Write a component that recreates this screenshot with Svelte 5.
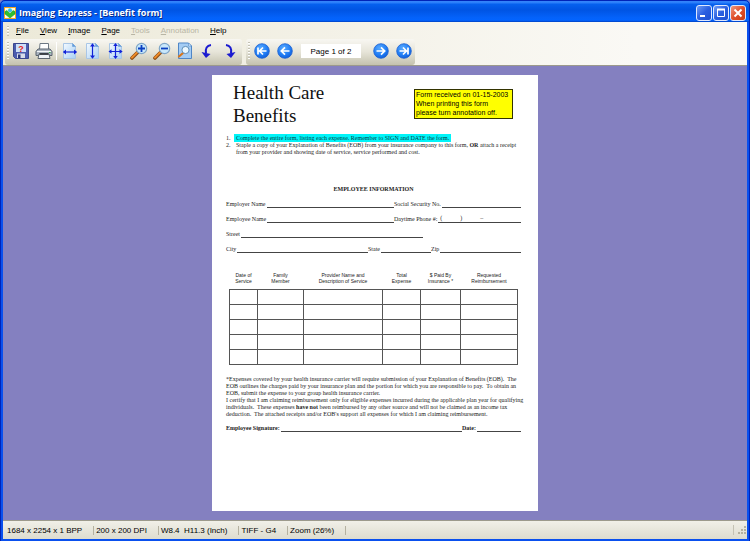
<script lang="ts">
	const menus = [
		{ key: 'F', rest: 'ile', off: false },
		{ key: 'V', rest: 'iew', off: false },
		{ key: 'I', rest: 'mage', off: false },
		{ key: 'P', rest: 'age', off: false },
		{ key: 'T', rest: 'ools', off: true },
		{ key: 'A', rest: 'nnotation', off: true },
		{ key: 'H', rest: 'elp', off: false }
	];

	const columns = [
		{ top: 'Date of', bottom: 'Service', width: 28 },
		{ top: 'Family', bottom: 'Member', width: 46 },
		{ top: 'Provider Name and', bottom: 'Description of Service', width: 79 },
		{ top: 'Total', bottom: 'Expense', width: 38 },
		{ top: '$ Paid By', bottom: 'Insurance *', width: 40 },
		{ top: 'Requested', bottom: 'Reimbursement', width: 57 }
	];
	const rows = [1, 2, 3, 4, 5];

	const status = ['1684 x 2254 x 1 BPP', '200 x 200 DPI', 'W8.4  H11.3 (Inch)', 'TIFF - G4', 'Zoom (26%)'];

	let page = $state(1);
	const total = 2;
	let pageLabel = $derived(`Page ${page} of ${total}`);
</script>

{#snippet sheet()}
	<path d="M2.5 1.5h9l3 3v12h-12z" fill="url(#sheet)" stroke="#a9c6e6" />
	<path d="M11.5 1.5v3h3z" fill="#5d9be0" stroke="#6f9fd4" stroke-width=".6" />
{/snippet}

{#snippet lens(plus: boolean)}
	<path d="M2 16l6-6" stroke="#8a4a14" stroke-width="3.6" stroke-linecap="round" />
	<path d="M2 15.6l6-6" stroke="#f08c28" stroke-width="2" stroke-linecap="round" />
	<circle cx="11.5" cy="6.5" r="5.2" fill="#c9e8fb" stroke="#7fa6c8" stroke-width="1.2" />
	<path d={plus ? 'M8 6.5h7M11.5 3v7' : 'M8 6.5h7'} stroke="#0a3fc0" stroke-width="1.8" />
{/snippet}

{#snippet ball(d: string)}
	<svg viewBox="0 0 18 18" width="18" height="18" fill="none" aria-hidden="true">
		<circle cx="9" cy="9" r="7.3" fill="url(#ball)" stroke="#1c5fd0" stroke-width=".8" />
		<path {d} stroke="#fff" stroke-width="1.7" />
	</svg>
{/snippet}

<svg class="defs" width="0" height="0" aria-hidden="true">
	<defs>
		<linearGradient id="sheet" x1="0" y1="0" x2="1" y2="1">
			<stop offset="0" stop-color="#f4faff" />
			<stop offset="1" stop-color="#a9d0f4" />
		</linearGradient>
		<radialGradient id="ball" cx=".4" cy=".3" r=".8">
			<stop offset="0" stop-color="#58aaff" />
			<stop offset=".6" stop-color="#1f7cf4" />
			<stop offset="1" stop-color="#0d55d0" />
		</radialGradient>
	</defs>
</svg>

<div class="window">
	<header class="titlebar">
		<svg class="logo" viewBox="0 0 12 12" width="12" height="12" aria-hidden="true">
			<rect width="12" height="12" fill="#f5a623" />
			<rect x="1" y="1" width="10" height="10" fill="#fffbe0" />
			<path d="M1 4.5l2-1 3 3 3-3 2 1v2.5L6 11 1 7z" fill="#2fc02f" stroke="#138a2a" stroke-width=".5" />
			<circle cx="6" cy="3.3" r="2" fill="#35c4e8" />
		</svg>
		<h1>Imaging Express - [Benefit form]</h1>
		<div class="caption">
			<button aria-label="Minimize"><svg viewBox="0 0 14 14" width="14" height="14"><path d="M3 10h5" stroke="#fff" stroke-width="2" /></svg></button>
			<button aria-label="Maximize"><svg viewBox="0 0 14 14" width="14" height="14" fill="none"><path d="M3.5 3.5h7v7h-7z" stroke="#fff" /><path d="M3 3.5h8" stroke="#fff" stroke-width="2" /></svg></button>
			<button class="close" aria-label="Close"><svg viewBox="0 0 14 14" width="14" height="14"><path d="M3.5 3.5l7 7M10.5 3.5l-7 7" stroke="#fff" stroke-width="2" /></svg></button>
		</div>
	</header>

	<div class="bars">
		<nav class="menubar">
			<span class="grip"></span>
			{#each menus as m}
				<button disabled={m.off}><u>{m.key}</u>{m.rest}</button>
			{/each}
		</nav>
		<div class="toolbars">
			<div class="toolbar" role="toolbar" aria-label="Standard">
				<span class="grip"></span>
				<button aria-label="Save as">
					<svg viewBox="0 0 18 18" width="18" height="18" aria-hidden="true">
						<path d="M1.5 1.5h15v15h-13l-2-2z" fill="#4c5cae" stroke="#3b478e" />
						<path d="M4 2h10v8H4z" fill="#cfe0f8" />
						<path d="M5 11.5h8V16H5z" fill="#d8dcea" />
						<path d="M6 12.5h2.5V16H6z" fill="#29357c" />
						<text x="9" y="9.5" class="ask">?</text>
					</svg>
				</button>
				<button aria-label="Print">
					<svg viewBox="0 0 18 18" width="18" height="18" aria-hidden="true">
						<path d="M5 1.5h8.5v6h-9z" fill="#fff" stroke="#6d7884" />
						<path d="M3 7h12l2 2.5v4H1v-4z" fill="#a9b3bf" stroke="#59636e" />
						<path d="M2 9.5h14" stroke="#f2f5f8" />
						<path d="M4 12h10l1 4.5H3z" fill="#eef3f8" stroke="#5c6671" />
						<path d="M4.5 12h9" stroke="#20262c" stroke-width="1.5" />
						<path d="M14 10.5h1.5" stroke="#35b44a" />
					</svg>
				</button>
				<span class="sep"></span>
				<button aria-label="Fit width">
					<svg viewBox="0 0 18 18" width="18" height="18" aria-hidden="true">
						{@render sheet()}
						<path d="M3 10h12" stroke="#1222d8" stroke-width="1.2" />
						<path d="M5 7.6v4.8L1.8 10zM13 7.6v4.8l3.2-2.4z" fill="#1222d8" />
					</svg>
				</button>
				<button aria-label="Fit height">
					<svg viewBox="0 0 18 18" width="18" height="18" aria-hidden="true">
						{@render sheet()}
						<path d="M8.5 3v12" stroke="#1222d8" stroke-width="1.2" />
						<path d="M6 4.5h5L8.5 1.2zM6 13.5h5l-2.5 3.3z" fill="#1222d8" />
					</svg>
				</button>
				<button aria-label="Fit page">
					<svg viewBox="0 0 18 18" width="18" height="18" aria-hidden="true">
						{@render sheet()}
						<path d="M3 9.5h12M8.5 3v12" stroke="#1222d8" stroke-width="1.2" />
						<path d="M4.5 7.2v4.6L1.5 9.5zM12.5 7.2v4.6l3.2-2.3zM6.2 4h4.6L8.5 1zM6.2 14h4.6l-2.3 3z" fill="#1222d8" />
					</svg>
				</button>
				<button aria-label="Zoom in">
					<svg viewBox="0 0 18 18" width="18" height="18" aria-hidden="true">{@render lens(true)}</svg>
				</button>
				<button aria-label="Zoom out">
					<svg viewBox="0 0 18 18" width="18" height="18" aria-hidden="true">{@render lens(false)}</svg>
				</button>
				<button aria-label="Zoom page">
					<svg viewBox="0 0 18 18" width="18" height="18" aria-hidden="true">
						<path d="M2.5 1h10l3 3v12.5h-13z" fill="#a4ccf4" stroke="#4f86c6" />
						<path d="M12.5 1v3h3z" fill="#e8f4ff" stroke="#4f86c6" stroke-width=".6" />
						<path d="M3 14.5l4-3.5" stroke="#d8761c" stroke-width="2.2" stroke-linecap="round" />
						<circle cx="9.5" cy="8" r="3.6" fill="#eaf7ff" stroke="#5f8fb8" />
					</svg>
				</button>
				<button aria-label="Rotate left">
					<svg viewBox="0 0 18 18" width="18" height="18" fill="none" aria-hidden="true">
						<path d="M12 3C8 3.500 6 6.500 7 11.5" stroke="#1a1ad0" stroke-width="2" />
						<path d="M2.500 10l4.500 6 4.500-4z" fill="#1a1ad0" />
					</svg>
				</button>
				<button aria-label="Rotate right">
					<svg viewBox="0 0 18 18" width="18" height="18" fill="none" aria-hidden="true">
						<path d="M4 3C8 3.500 10 6.500 9 11.5" stroke="#1a1ad0" stroke-width="2" />
						<path d="M13.500 10L9 16l-4.500-4z" fill="#1a1ad0" />
					</svg>
				</button>
			</div>
			<div class="toolbar" role="toolbar" aria-label="Pages">
				<span class="grip"></span>
				<button aria-label="First page" onclick={() => (page = 1)}>{@render ball('M5 5.5v7M13.5 9H6.8M10 5.5L6.5 9l3.5 3.5')}</button>
				<button aria-label="Previous page" onclick={() => (page = Math.max(1, page - 1))}>{@render ball('M13.5 9H5.5M9 5.3L5.3 9 9 12.7')}</button>
				<input type="text" aria-label="Current page" readonly value={pageLabel} />
				<button aria-label="Next page" onclick={() => (page = Math.min(total, page + 1))}>{@render ball('M4.5 9h8M9 5.3L12.7 9 9 12.7')}</button>
				<button aria-label="Last page" onclick={() => (page = total)}>{@render ball('M13 5.5v7M4.5 9h6.7M8 5.5L11.5 9 8 12.5')}</button>
			</div>
		</div>
	</div>

	<main class="workspace">
		<article class="paper">
			<h2>Health Care<br />Benefits</h2>
			<p class="note">Form received on 01-15-2003<br />When printing this form<br />please turn annotation off.</p>

			<ol>
				<li><span>1.</span><mark>Complete the entire form, listing each expense. Remember to SIGN and DATE the form.</mark></li>
				<li>
					<span>2.</span>
					<div>
						Staple a copy of your Explanation of Benefits (EOB) from your insurance company to this form, <b>OR</b> attach a receipt<br />
						from your provider and showing date of service, service performed and cost.
					</div>
				</li>
			</ol>

			<h3>EMPLOYEE INFORMATION</h3>
			<section class="fields">
				<div class="line half">
					<p>Employer Name<i></i></p>
					<p>Social Security No.<i></i></p>
				</div>
				<div class="line half">
					<p>Employee Name<i></i></p>
					<p>Daytime Phone #:<i class="phone"><span>(</span><span>)</span><span>–</span></i></p>
				</div>
				<div class="line street">
					<p>Street<i></i></p>
				</div>
				<div class="line thirds">
					<p>City<i></i></p>
					<p>State<i></i></p>
					<p>Zip<i></i></p>
				</div>
			</section>

			<table>
				<colgroup>
					{#each columns as c}
						<col style="width: {c.width}px" />
					{/each}
				</colgroup>
				<thead>
					<tr>
						{#each columns as c}
							<th>{c.top}<br />{c.bottom}</th>
						{/each}
					</tr>
				</thead>
				<tbody>
					{#each rows as r (r)}
						<tr>
							{#each columns as c}
								<td></td>
							{/each}
						</tr>
					{/each}
				</tbody>
			</table>

			<p class="terms">
				*Expenses covered by your health insurance carrier will require submission of your Explanation of Benefits (EOB).&nbsp; The<br />
				EOB outlines the charges paid by your insurance plan and the portion for which you are responsible to pay.&nbsp; To obtain an<br />
				EOB, submit the expense to your group health insurance carrier.<br />
				I certify that I am claiming reimbursement only for eligible expenses incurred during the applicable plan year for qualifying<br />
				individuals.&nbsp; These expenses <b>have not</b> been reimbursed by any other source and will not be claimed as an income tax<br />
				deduction.&nbsp; The attached receipts and/or EOB's support all expenses for which I am claiming reimbursement.
			</p>
			<div class="line sign">
				<p>Employee Signature:<i></i></p>
				<p>Date:<i></i></p>
			</div>
		</article>
	</main>

	<footer class="statusbar">
		{#each status as s}
			<span>{s}</span>
		{/each}
		<svg viewBox="0 0 10 10" width="10" height="10" aria-hidden="true">
			<path d="M7 1h2v2H7zM4 4h2v2H4zM7 4h2v2H7zM1 7h2v2H1zM4 7h2v2H4zM7 7h2v2H7z" fill="#b4b1a0" />
		</svg>
	</footer>
</div>

<style>
	:global(body) {
		margin: 0;
		background: #8480c0;
	}
	.window {
		display: flex;
		flex-direction: column;
		box-sizing: border-box;
		min-height: 100vh;
		border: solid #0a50ee;
		border-width: 0 3px 3px;
		border-radius: 5px 5px 0 0;
		outline: 1px solid #0024b8;
		outline-offset: -1px;
		background: #0a50ee;
		font-family: 'Liberation Sans', Arial, sans-serif;
		font-size: 8px;
		color: #000;
	}
	.defs {
		position: absolute;
	}
	h1, h2, h3, p, ol {
		margin: 0;
		padding: 0;
	}
	button {
		border: 0;
		padding: 0;
		background: none;
		font: inherit;
		color: inherit;
	}
	svg {
		display: block;
	}

	.titlebar {
		display: flex;
		align-items: center;
		gap: 3px;
		height: 22px;
		margin: 0 -3px;
		padding: 3px 4px 0;
		box-sizing: border-box;
		border-radius: 5px 5px 0 0;
		background: linear-gradient(#0a4fdc, #3a8cff 8%, #0560ee 20%, #0054e3 45%, #0462fa 80%, #0364ff 92%, #0040c0);
	}
	h1 {
		flex: 1;
		font: bold 9px/14px 'Open Sans', sans-serif;
		color: #fff;
		text-shadow: 1px 1px #0a2c8a;
	}
	.caption {
		display: flex;
		gap: 1px;
	}
	.caption button {
		width: 16px;
		height: 16px;
		border: 1px solid #dfe9ff;
		border-radius: 3px;
		background: linear-gradient(135deg, #6f9cf5, #2a5fe0 50%, #1f50d0);
	}
	.caption .close {
		background: linear-gradient(135deg, #f09a80, #e0502c 50%, #c83c14);
	}

	.bars {
		display: flex;
		flex-direction: column;
		background: linear-gradient(90deg, #ece9d8, #faf9f5 85%);
		border-bottom: 1px solid #9c9a8c;
	}
	.menubar {
		display: flex;
		align-items: center;
		height: 17px;
		padding-left: 4px;
		gap: 11px;
	}
	.menubar .grip {
		height: 10px;
		margin-right: -4px;
	}
	.menubar button:disabled {
		color: #b8b5a4;
	}
	.grip {
		width: 2px;
		height: 18px;
		background: repeating-linear-gradient(#c4c2b4 0 1px, #fff 1px 2px, transparent 2px 3px);
	}
	.toolbars {
		display: flex;
		gap: 4px;
		padding-left: 2px;
	}
	.toolbar {
		display: flex;
		align-items: center;
		box-sizing: border-box;
		height: 26px;
		padding: 0 0 2px 2px;
		border-radius: 3px;
		background: linear-gradient(#f8f7f2, #e6e4d8 50%, #c4c2ae);
	}
	.toolbar button {
		display: flex;
		align-items: center;
		justify-content: center;
		width: 23px;
		height: 22px;
	}
	.sep {
		width: 1px;
		height: 18px;
		margin: 0 1px;
		background: #fff;
	}
	.ask {
		font: bold 9px 'Liberation Sans', sans-serif;
		fill: #e81c1c;
		text-anchor: middle;
	}
	input {
		width: 60px;
		height: 14px;
		margin: 0 8px 0 5px;
		padding: 0;
		border: 0;
		background: #fff;
		font: inherit;
		text-align: center;
		outline: 0;
	}

	.workspace {
		flex: 1;
		padding: 9px 0;
		background: #8480c0;
	}
	.paper {
		position: relative;
		box-sizing: border-box;
		width: 326px;
		min-height: 436px;
		margin: 0 auto;
		padding: 6px 17px 0 14px;
		background: #fff;
		font: 6px/7px 'Liberation Serif', 'Times New Roman', serif;
		white-space: nowrap;
		color: #222;
	}
	h2 {
		margin-left: 7px;
		font-size: 19px;
		font-weight: normal;
		line-height: 23px;
		color: #111;
	}
	/* sticky annotation laid over the scan */
	.note {
		position: absolute;
		top: 14px;
		right: 25px;
		box-sizing: border-box;
		width: 99px;
		height: 30px;
		padding: 0 1px;
		border: 1px solid #333300;
		background: #ffff00;
		font: 7px/9px 'Liberation Sans', sans-serif;
		color: #000;
	}
	ol {
		margin-top: 8px;
		list-style: none;
	}
	li {
		display: flex;
	}
	li span {
		width: 8px;
	}
	li div {
		padding-left: 2px;
	}
	mark {
		margin-top: -1px;
		padding: 1px 2px 0;
		background: #00f4f8;
		color: #003c48;
	}
	h3 {
		margin-top: 30px;
		font-size: 6px;
		line-height: 7px;
		text-align: center;
	}
	.line {
		display: grid;
		align-items: end;
		height: 15px;
	}
	.line p {
		display: flex;
		align-items: end;
		gap: 1px;
	}
	.line i {
		flex: 1;
		height: 7px;
		border-bottom: 1px solid #444;
		font-style: normal;
	}
	.half {
		grid-template-columns: 168px 1fr;
	}
	.street {
		width: 197px;
	}
	.thirds {
		grid-template-columns: 142px 63px 1fr;
	}
	.line .phone {
		display: flex;
		gap: 18px;
		padding-left: 2px;
		line-height: 6px;
	}
	.sign {
		grid-template-columns: 236px 1fr;
		height: 14px;
		font-weight: bold;
	}

	table {
		width: 289px;
		margin: 19px 0 0 3px;
		border-collapse: collapse;
		table-layout: fixed;
	}
	th {
		padding: 0 0 5px;
		font: 5px/6px 'Liberation Sans', sans-serif;
	}
	td {
		height: 14px;
		padding: 0;
		border: 1px solid #555;
	}
	.terms {
		margin-top: 11px;
	}

	.statusbar {
		display: flex;
		align-items: center;
		height: 18px;
		padding-left: 4px;
		border-top: 1px solid #9c9a8c;
		background: linear-gradient(#f1f0e8, #dddccf);
		white-space: pre;
	}
	.statusbar span {
		padding-right: 11px;
		margin-right: 2px;
		border-right: 1px solid #b4b1a0;
	}
	.statusbar svg {
		margin-left: auto;
		padding-left: 3px;
		border-left: 1px solid #c4c2b4;
	}
</style>
